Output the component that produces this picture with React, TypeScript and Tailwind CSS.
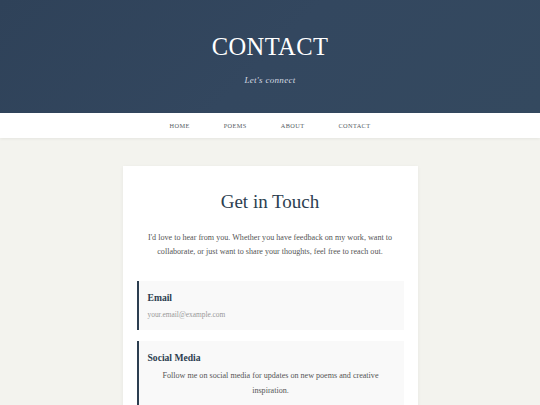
import React from "react";

const serif = { fontFamily: "'Liberation Serif', 'Times New Roman', serif" };

export default function App() {
  return (
    <div className="min-h-[405px] bg-[#f3f3ee]" style={serif}>
      <header className="h-[113px] bg-[linear-gradient(135deg,#2f4259_0%,#33475f_50%,#34495f_100%)] flex flex-col items-center pt-[33px]">
        <h1 className="text-[24.5px] leading-[28px] tracking-[0.4px] text-white">CONTACT</h1>
        <p className="mt-[13px] text-[9px] italic text-[#d6dbe2] tracking-[0.3px]">Let's connect</p>
      </header>
      <nav className="h-[25px] bg-white flex items-center justify-center gap-[34px] shadow-[0_1px_3px_rgba(0,0,0,0.06)]">
        {["HOME", "POEMS", "ABOUT", "CONTACT"].map((n) => (
          <a key={n} className="text-[6.3px] tracking-[0.4px] text-[#555b63] leading-none pt-[1px]">{n}</a>
        ))}
      </nav>
      <main className="flex justify-center pt-[28px]">
        <section className="w-[295px] bg-white px-[14px] pt-[25px] pb-[20px] shadow-[0_1px_4px_rgba(0,0,0,0.05)]">
          <h2 className="text-center text-[19px] leading-[22px] text-[#2c3e50]">Get in Touch</h2>
          <p className="mt-[18px] text-center text-[8.1px] leading-[14px] text-[#555]">
            I'd love to hear from you. Whether you have feedback on my work, want to collaborate, or just want to share your thoughts, feel free to reach out.
          </p>
          <div className="mt-[22px] bg-[#f9f9f9] border-l-2 border-[#2c3e50] pl-[9px] pt-[10px] pb-[9px]">
            <h3 className="text-[9.6px] font-bold text-[#2c3e50] leading-[14px]">Email</h3>
            <p className="mt-[4px] text-[7.4px] leading-[12px] text-[#999]">your.email@example.com</p>
          </div>
          <div className="mt-[11px] bg-[#f9f9f9] border-l-2 border-[#2c3e50] pl-[9px] pr-[10px] pt-[10px] pb-[12px]">
            <h3 className="text-[9.6px] font-bold text-[#2c3e50] leading-[14px]">Social Media</h3>
            <p className="mt-[3px] text-center text-[8.1px] leading-[15px] text-[#555]">
              Follow me on social media for updates on new poems and creative inspiration.
            </p>
          </div>
        </section>
      </main>
    </div>
  );
}
